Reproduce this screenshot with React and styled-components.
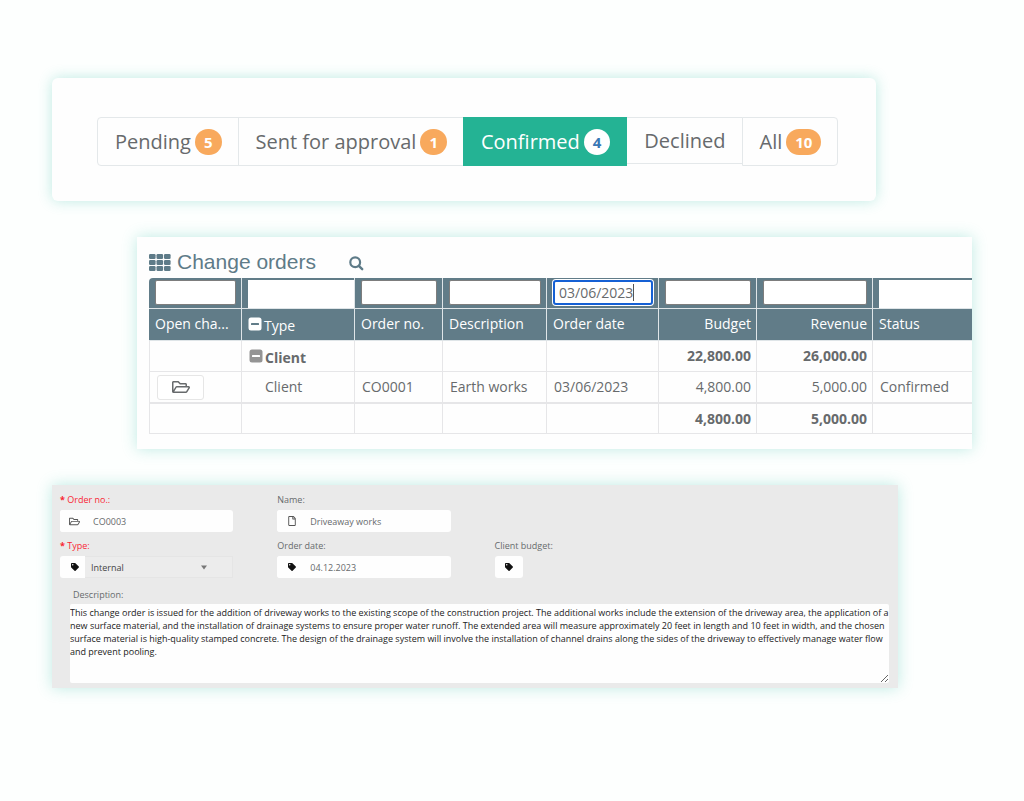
import styled, { createGlobalStyle, css } from "styled-components";
import { FaRegFile, FaRegFolderOpen, FaTag } from "react-icons/fa";

const tabs = [
  { label: "Pending", count: 5 },
  { label: "Sent for approval", count: 1 },
  { label: "Confirmed", count: 4, active: true },
  { label: "Declined" },
  { label: "All", count: 10 },
];

const columns = [
  { label: "Open cha...", width: 93, filter: "box" },
  { label: "Type", width: 113, filter: "plain", toggle: true },
  { label: "Order no.", width: 88, filter: "box" },
  { label: "Description", width: 104, filter: "box" },
  { label: "Order date", width: 112, filter: "box", value: "03/06/2023" },
  { label: "Budget", width: 98, filter: "box", right: true },
  { label: "Revenue", width: 116, filter: "box", right: true },
  { label: "Status", filter: "plain" },
];

const description =
  "This change order is issued for the addition of driveway works to the existing scope of the construction project. The additional works include the extension of the driveway area, the application of a new surface material, and the installation of drainage systems to ensure proper water runoff. The extended area will measure approximately 20 feet in length and 10 feet in width, and the chosen surface material is high-quality stamped concrete. The design of the drainage system will involve the installation of channel drains along the sides of the driveway to effectively manage water flow and prevent pooling.";

const GridIcon = () => (
  <svg width="22" height="17" viewBox="0 0 22 17" fill="currentColor" aria-hidden="true">
    {[0, 6, 12].map((y) =>
      [0, 7.5, 15].map((x) => (
        <rect key={`${x}-${y}`} x={x} y={y} width="6.6" height="5" rx="1.2" />
      ))
    )}
  </svg>
);

const SearchIcon = () => (
  <svg width="15" height="15" viewBox="0 0 15 15" fill="none" stroke="currentColor" aria-hidden="true">
    <circle cx="6.2" cy="6.2" r="4.9" strokeWidth="2.2" />
    <path d="M9.8 9.8L13.2 13.2" strokeWidth="2.4" strokeLinecap="round" />
  </svg>
);

const MinusIcon = () => (
  <svg width="14" height="14" viewBox="0 0 14 14" aria-hidden="true">
    <rect x="0.5" y="0.5" width="13" height="13" rx="2.5" fill="currentColor" />
    <rect x="3" y="6" width="8" height="2" rx="0.5" fill="var(--dash)" />
  </svg>
);

const App = () => {
  return (
    <>
      <GlobalStyle />
      <Page>
        <TabsCard>
          <TabGroup>
            {tabs.map((tab) => (
              <Tab key={tab.label} type="button" $active={tab.active} $short={!tab.count}>
                {tab.label}
                {tab.count && <Badge $active={tab.active}>{tab.count}</Badge>}
              </Tab>
            ))}
          </TabGroup>
        </TabsCard>

        <OrdersCard>
          <OrdersHeader>
            <GridIcon />
            <h2>Change orders</h2>
            <SearchButton type="button" aria-label="Search">
              <SearchIcon />
            </SearchButton>
          </OrdersHeader>
          <OrdersTable>
            <colgroup>
              {columns.map((col) => (
                <col key={col.label} width={col.width} />
              ))}
            </colgroup>
            <thead>
              <FilterRow>
                {columns.map((col) => (
                  <FilterCell key={col.label} $plain={col.filter === "plain"}>
                    <FilterInput
                      aria-label={`Filter ${col.label}`}
                      defaultValue={col.value}
                      $plain={col.filter === "plain"}
                      $focused={!!col.value}
                    />
                    {col.value && <Caret />}
                  </FilterCell>
                ))}
              </FilterRow>
              <tr>
                {columns.map((col) => (
                  <HeadCell key={col.label} $right={col.right}>
                    {col.toggle ? (
                      <Group>
                        <Toggle type="button" aria-label="Collapse all" $head>
                          <MinusIcon />
                        </Toggle>
                        <span>{col.label}</span>
                      </Group>
                    ) : (
                      col.label
                    )}
                  </HeadCell>
                ))}
              </tr>
            </thead>
            <tbody>
              <tr>
                <Cell />
                <Cell $bold>
                  <Group>
                    <Toggle type="button" aria-label="Collapse Client">
                      <MinusIcon />
                    </Toggle>
                    <span>Client</span>
                  </Group>
                </Cell>
                <Cell />
                <Cell />
                <Cell />
                <Cell $bold $right>22,800.00</Cell>
                <Cell $bold $right>26,000.00</Cell>
                <Cell />
              </tr>
              <tr>
                <Cell>
                  <OpenButton type="button" aria-label="Open change order">
                    <FaRegFolderOpen size={18} />
                  </OpenButton>
                </Cell>
                <Cell $nested>Client</Cell>
                <Cell>CO0001</Cell>
                <Cell>Earth works</Cell>
                <Cell>03/06/2023</Cell>
                <Cell $right>4,800.00</Cell>
                <Cell $right>5,000.00</Cell>
                <Cell>Confirmed</Cell>
              </tr>
              <TotalRow>
                <Cell />
                <Cell />
                <Cell />
                <Cell />
                <Cell />
                <Cell $bold $right>4,800.00</Cell>
                <Cell $bold $right>5,000.00</Cell>
                <Cell />
              </TotalRow>
            </tbody>
          </OrdersTable>
        </OrdersCard>

        <FormCard>
          <Fields>
            <Field>
              <Label htmlFor="order-no" $required><b>*</b> Order no.:</Label>
              <Control>
                <IconBox $muted><FaRegFolderOpen size={11} /></IconBox>
                <TextInput id="order-no" defaultValue="CO0003" />
              </Control>
            </Field>
            <Field $wide>
              <Label htmlFor="name">Name:</Label>
              <Control>
                <IconBox $muted><FaRegFile size={10} /></IconBox>
                <TextInput id="name" defaultValue="Driveaway works" />
              </Control>
            </Field>
            <Field>
              <Label htmlFor="type" $required><b>*</b> Type:</Label>
              <Control $clear>
                <IconBox><FaTag size={8} /></IconBox>
                <SelectWrap>
                  <select id="type" defaultValue="Internal">
                    <option>Internal</option>
                    <option>Client</option>
                  </select>
                  <svg width="6" height="5" viewBox="0 0 6 5" aria-hidden="true">
                    <path d="M0 0.5H6L3 4.5Z" fill="#777" />
                  </svg>
                </SelectWrap>
              </Control>
            </Field>
            <Field>
              <Label htmlFor="order-date">Order date:</Label>
              <Control>
                <IconBox><FaTag size={8} /></IconBox>
                <TextInput id="order-date" defaultValue="04.12.2023" />
              </Control>
            </Field>
            <Field>
              <Label as="span">Client budget:</Label>
              <Control $clear>
                <BudgetButton type="button" aria-label="Client budget">
                  <FaTag size={8} />
                </BudgetButton>
              </Control>
            </Field>
          </Fields>
          <DescriptionField>
            <Label htmlFor="description">Description:</Label>
            <textarea id="description" spellCheck="false" defaultValue={description} />
          </DescriptionField>
        </FormCard>
      </Page>
    </>
  );
};

const GlobalStyle = createGlobalStyle`
  *, *::before, *::after {
    box-sizing: border-box;
  }

  body {
    margin: 0;
    background: #fdfffe;
    color: #676a6c;
    font-family: "Open Sans", sans-serif;
  }

  button, input, select, textarea {
    margin: 0;
    padding: 0;
    border: 0;
    font: inherit;
    color: inherit;
  }
`;

const Page = styled.main`
  display: flex;
  flex-direction: column;
  gap: 36px;
  padding: 78px 52px 80px;
`;

const Card = styled.section`
  background: #fefefe;
  box-shadow: 0 0 14px rgba(60, 190, 170, 0.32);
`;

const TabsCard = styled(Card)`
  margin-right: 96px;
  padding: 39px 45px 35px;
  border-radius: 6px;
`;

const TabGroup = styled.div`
  display: flex;
  align-items: flex-start;
`;

const Tab = styled.button`
  display: flex;
  align-items: center;
  gap: 4px;
  height: ${({ $short }) => ($short ? 47 : 49)}px;
  padding: 0 16px 0 17px;
  border: 1px solid #e4e8ea;
  background: #fefefe;
  font-size: 20px;
  line-height: 28px;
  white-space: nowrap;

  & + & {
    margin-left: -1px;
  }

  &:first-child {
    border-radius: 4px 0 0 4px;
  }

  &:last-child {
    border-radius: 0 4px 4px 0;
  }

  ${({ $active }) =>
    $active &&
    css`
      position: relative;
      border-color: #24b394;
      background: #24b394;
      color: #fff;
    `}
`;

const Badge = styled.span`
  padding: 0 9px;
  border-radius: 13px;
  background: ${({ $active }) => ($active ? "#fff" : "#f8a95d")};
  color: ${({ $active }) => ($active ? "#3a78b5" : "#fff")};
  font-size: 15px;
  font-weight: 700;
  line-height: 26px;
`;

const OrdersCard = styled(Card)`
  margin-left: 85px;
  padding: 11px 0 15px 12px;
  overflow: hidden;
`;

const OrdersHeader = styled.header`
  display: flex;
  align-items: center;
  height: 28px;
  margin-bottom: 2px;
  color: #5e7b88;

  h2 {
    margin: 0 33px 0 6px;
    font-family: "Liberation Sans", Arial, sans-serif;
    font-size: 21px;
    font-weight: 400;
    line-height: 28px;
  }
`;

const SearchButton = styled.button`
  display: flex;
  padding-top: 3px;
  background: none;
`;

const OrdersTable = styled.table`
  width: 100%;
  table-layout: fixed;
  border-spacing: 0;
  font-size: 14px;
  line-height: 20px;
  white-space: nowrap;

  td:first-child {
    border-left: 1px solid #e6e6e8;
  }

  th:last-child,
  td:last-child {
    border-right: 0;
  }

  thead tr:first-child th:first-child {
    border-top-left-radius: 4px;
  }
`;

const FilterRow = styled.tr`
  height: 31px;
`;

const FilterCell = styled.th`
  position: relative;
  padding: ${({ $plain }) => ($plain ? "2px 0 0 6px" : "2px 5px 3px 6px")};
  border-right: 1px solid #dfe5e8;
  border-bottom: 1px solid #dfe5e8;
  background: #617c88;
  font-weight: 400;
`;

const FilterInput = styled.input`
  display: block;
  width: 100%;
  height: ${({ $plain }) => ($plain ? 28 : 25)}px;
  padding: 0 4px;
  border: ${({ $plain }) => ($plain ? 0 : "1px solid #7d7d7d")};
  border-radius: ${({ $plain }) => ($plain ? 0 : 2)}px;
  background: #fff;
  outline: none;

  ${({ $focused }) =>
    $focused &&
    css`
      border: 2px solid #1560d4;
      border-radius: 3px;
      box-shadow: 0 0 0 1px #fff;
    `}
`;

const Caret = styled.span`
  position: absolute;
  top: 6px;
  left: 86px;
  width: 1px;
  height: 17px;
  background: #555;
`;

const HeadCell = styled.th`
  height: 32px;
  padding: 0 5px 2px 6px;
  border-right: 1px solid #dfe5e8;
  border-bottom: 1px solid #dfe5e8;
  background: #617c88;
  color: #fff;
  font-weight: 400;
  text-align: ${({ $right }) => ($right ? "right" : "left")};
`;

const Cell = styled.td`
  height: 31px;
  padding: 0 5px 0 ${({ $nested }) => ($nested ? 23 : 7)}px;
  border-right: 1px solid #e6e6e8;
  border-bottom: 1px solid #e6e6e8;
  font-weight: ${({ $bold }) => ($bold ? 700 : 400)};
  text-align: ${({ $right }) => ($right ? "right" : "left")};
`;

const TotalRow = styled.tr`
  td {
    border-top: 1px solid #e6e6e8;
  }
`;

const Group = styled.div`
  display: flex;
  align-items: center;
  gap: 2px;

  span {
    padding-top: 4px;
  }
`;

const Toggle = styled.button`
  --dash: ${({ $head }) => ($head ? "#617c88" : "#fff")};
  display: flex;
  background: none;
  color: ${({ $head }) => ($head ? "#fff" : "#949494")};
`;

const OpenButton = styled.button`
  display: flex;
  align-items: center;
  justify-content: center;
  width: 47px;
  height: 25px;
  border: 1px solid #e6e6e6;
  border-radius: 3px;
  background: #fff;
`;

const FormCard = styled(Card)`
  margin-right: 74px;
  padding: 8px 9px 5px 8px;
  background: #eaeaea;
  font-size: 9px;
`;

const Fields = styled.div`
  display: grid;
  grid-template-columns: repeat(4, 1fr);
  gap: 7px 44px;
  padding-right: 4px;
`;

const Field = styled.div`
  display: flex;
  flex-direction: column;
  gap: 3px;
  grid-column-end: ${({ $wide }) => ($wide ? -1 : "auto")};
  width: ${({ $wide }) => ($wide ? "calc((100% - 88px) / 3)" : "auto")};
  ${({ $wide }) => $wide && "grid-column-start: 2;"}
`;

const Label = styled.label`
  line-height: 14px;
  color: ${({ $required }) => ($required ? "#f91f34" : "#676a6c")};
`;

const Control = styled.div`
  display: flex;
  height: 22px;
  border-radius: 3px;
  background: ${({ $clear }) => ($clear ? "transparent" : "#fefefe")};
`;

const IconBox = styled.span`
  display: flex;
  flex: 0 0 auto;
  align-items: center;
  justify-content: center;
  width: 25px;
  padding-left: 4px;
  border-radius: 3px 0 0 3px;
  background: #fefefe;
  color: ${({ $muted }) => ($muted ? "#555" : "#111")};

  ${Control} svg {
    flex: none;
  }
`;

const TextInput = styled.input`
  flex: 1;
  min-width: 0;
  padding: 0 8px;
  background: none;
`;

const SelectWrap = styled.div`
  position: relative;
  flex: 1;

  select {
    width: 100%;
    height: 100%;
    padding: 0 6px;
    border: 1px solid #e5e5e5;
    border-left: 0;
    appearance: none;
    background: #ececec;
    color: #444;
  }

  svg {
    position: absolute;
    top: 9px;
    right: 26px;
    pointer-events: none;
  }
`;

const BudgetButton = styled.button`
  display: flex;
  align-items: center;
  justify-content: center;
  width: 28px;
  border-radius: 3px;
  background: #fefefe;
  color: #111;
`;

const DescriptionField = styled.div`
  display: flex;
  flex-direction: column;
  gap: 2px;
  margin-top: 10px;
  padding-left: 10px;

  label {
    padding-left: 3px;
  }

  textarea {
    width: 100%;
    height: 79px;
    padding: 2px 0 2px 0;
    border-radius: 2px;
    background: #fefefe;
    color: #222;
    line-height: 13px;
    outline: none;
    resize: vertical;
  }
`;

export default App;
